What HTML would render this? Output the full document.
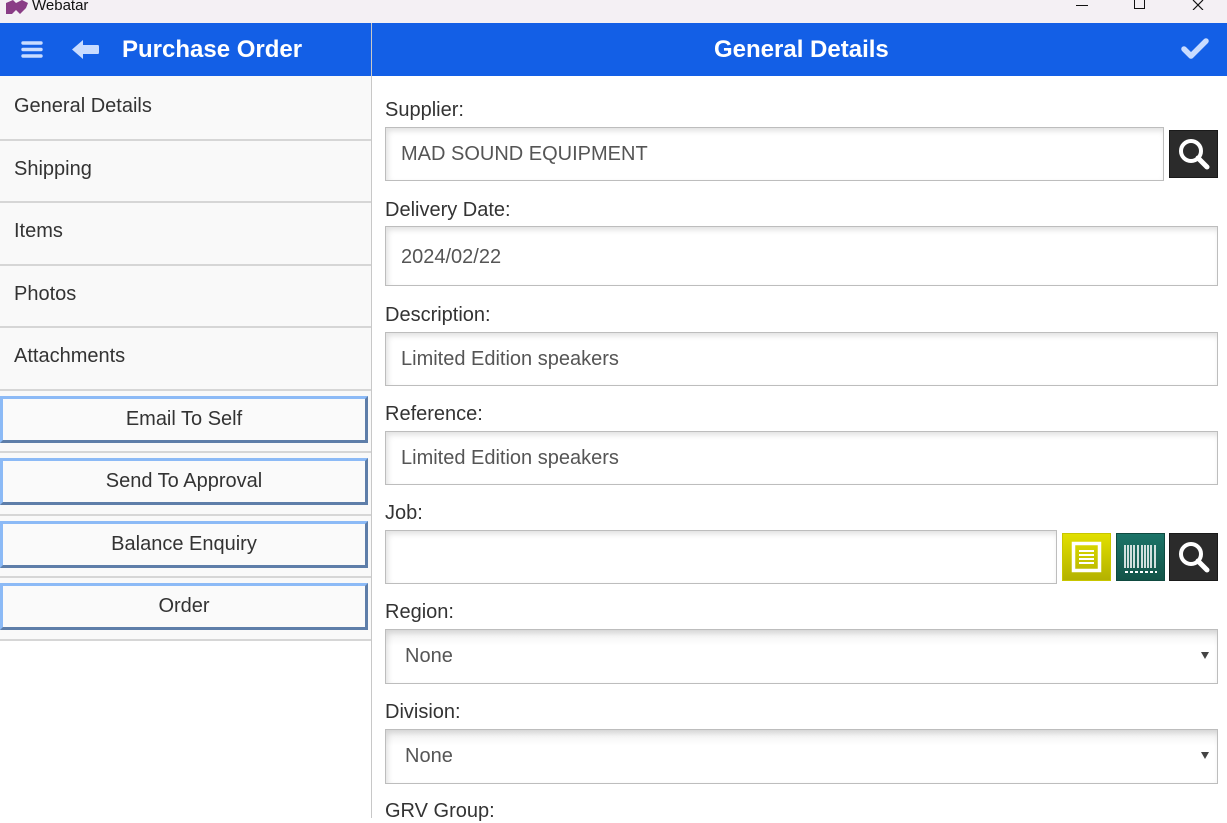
<!DOCTYPE html>
<html><head><meta charset="utf-8"><style>
*{box-sizing:border-box;margin:0;padding:0}
body{width:1227px;height:818px;overflow:hidden;font-family:"Liberation Sans",Arial,sans-serif;background:#fff;position:relative}
.tb{position:absolute;left:0;top:0;width:1227px;height:23px;background:#f4f0f4}
.tb span{position:absolute;left:32px;top:-3px;font-size:15px;color:#111}
.hdr{position:absolute;left:0;top:23px;width:1227px;height:53px;background:#135fe6;color:#fff}
.hdr .t1{position:absolute;left:122px;top:13px;font-size:24px;font-weight:bold}
.hdr .t2{position:absolute;left:714px;top:13px;font-size:24px;font-weight:bold}
.sep{position:absolute;left:371px;top:23px;width:1px;height:795px;background:#c8c8c8}
.side{position:absolute;left:0;top:76px;width:371px;margin-top:2px}
.row{height:62.6px;background:#f9f9f9;border-bottom:2px solid #d6d6d6;font-size:20px;color:#333;padding:17px 0 0 14px}
.side .row:first-child{margin-top:-2px;height:64.6px;padding-top:19px}
.bw{height:62.5px;background:#f9f9f9;border-bottom:2px solid #d6d6d6;padding-top:5px}
.btn{width:368px;height:47px;border:3px solid;border-color:#8cbaf6 #5e7ea9 #5e7ea9 #8cbaf6;background:#fafafa;text-align:center;font-size:20px;color:#333;line-height:41px}
.lbl{position:absolute;left:385px;font-size:20px;color:#333}
.inp{position:absolute;left:385px;height:54px;border:1px solid #bdbdbd;background:#fff;box-shadow:inset 2px 3px 6px rgba(0,0,0,.12);font-size:20px;color:#555;padding:15px 0 0 15px}
.ib{position:absolute;width:49px;height:48px;background:#2b2b2b;border:1px solid #1a1a1a}
.arr{position:absolute;right:8px;top:22px;width:0;height:0;border-left:4px solid transparent;border-right:4px solid transparent;border-top:7px solid #444}
</style></head><body>
<div class="tb">
<svg style="position:absolute;left:6px;top:0" width="22" height="14"><path d="M0 3 L7 0 L10 3 L16 0 L22 3 L20 8 L14 14 L10 10 L6 14 L0 14Z" fill="#8a3d86"/></svg>
<span>Webatar</span>
<div style="position:absolute;left:1076px;top:5px;width:12px;height:1px;background:#111"></div>
<div style="position:absolute;left:1134px;top:0;width:11px;height:9px;border:1px solid #111;border-top:none"></div>
<svg style="position:absolute;left:1192px;top:0" width="14" height="10"><path d="M1 0 L11 10 M11 0 L1 10" stroke="#111" stroke-width="1.2"/></svg>
</div>
<div class="hdr">
<svg style="position:absolute;left:21px;top:18px" width="22" height="17"><g stroke="#c9dcff" stroke-width="3.4" stroke-linecap="round"><path d="M2 2H20M2 8.5H20M2 15H20"/></g></svg>
<svg style="position:absolute;left:72px;top:16px" width="28" height="21"><path d="M0 10.5 L11 1 L11 6 L26 6 Q27 6 27 8 L27 13 Q27 15 26 15 L11 15 L11 20Z" fill="#c9dcff"/></svg>
<div class="t1">Purchase Order</div>
<div class="t2">General Details</div>
<svg style="position:absolute;left:1181px;top:15px" width="28" height="22"><path d="M3 11 L10 18 L25 3" stroke="#c9dcff" stroke-width="5.5" fill="none" stroke-linecap="round" stroke-linejoin="round"/></svg>
</div>
<div class="sep"></div>
<div class="side">
<div class="row">General Details</div>
<div class="row">Shipping</div>
<div class="row">Items</div>
<div class="row">Photos</div>
<div class="row">Attachments</div>
<div class="bw"><div class="btn">Email To Self</div></div>
<div class="bw"><div class="btn">Send To Approval</div></div>
<div class="bw"><div class="btn">Balance Enquiry</div></div>
<div class="bw"><div class="btn">Order</div></div>
</div>

<div class="lbl" style="top:99px">Supplier:</div>
<div class="inp" style="top:127px;width:779px">MAD SOUND EQUIPMENT</div>
<div class="ib" style="left:1169px;top:130px"><svg width="47" height="46"><circle cx="21" cy="20" r="10" stroke="#fff" stroke-width="4" fill="none"/><path d="M28 27 L37 36" stroke="#fff" stroke-width="5" stroke-linecap="round"/></svg></div>

<div class="lbl" style="top:199px">Delivery Date:</div>
<div class="inp" style="top:226px;width:833px;height:60px;padding-top:19px">2024/02/22</div>

<div class="lbl" style="top:304px">Description:</div>
<div class="inp" style="top:332px;width:833px">Limited Edition speakers</div>

<div class="lbl" style="top:403px">Reference:</div>
<div class="inp" style="top:431px;width:833px">Limited Edition speakers</div>

<div class="lbl" style="top:502px">Job:</div>
<div class="inp" style="top:530px;width:672px"></div>
<div class="ib" style="left:1062px;top:533px;background:linear-gradient(#e2e000,#b4b200);border-color:#c8c600"><svg width="47" height="46"><rect x="10.5" y="9.5" width="26" height="27" stroke="#fff" stroke-width="3.5" fill="none"/><path d="M16 17H31M16 21H31M16 25H31M16 29H31" stroke="#fff" stroke-width="2"/></svg></div>
<div class="ib" style="left:1116px;top:533px;background:linear-gradient(#1c7468,#135448);border-color:#0f4a40"><svg width="47" height="46"><path d="M8 11V34M11 11V34M14 11V34M17 11V34M21 11V34M25 11V34M28 11V34M31 11V34M34 11V34M38 11V34" stroke="#fff" stroke-width="1.6"/><path d="M8 38H40" stroke="#fff" stroke-width="2" stroke-dasharray="3 2"/></svg></div>
<div class="ib" style="left:1169px;top:533px"><svg width="47" height="46"><circle cx="21" cy="20" r="10" stroke="#fff" stroke-width="4" fill="none"/><path d="M28 27 L37 36" stroke="#fff" stroke-width="5" stroke-linecap="round"/></svg></div>

<div class="lbl" style="top:601px">Region:</div>
<div class="inp" style="top:629px;width:833px;height:55px;padding-left:19px;background:linear-gradient(#f0f0f0,#fff 30%)">None<div class="arr"></div></div>

<div class="lbl" style="top:701px">Division:</div>
<div class="inp" style="top:729px;width:833px;height:55px;padding-left:19px;background:linear-gradient(#f0f0f0,#fff 30%)">None<div class="arr"></div></div>

<div class="lbl" style="top:800px">GRV Group:</div>
</body></html>
